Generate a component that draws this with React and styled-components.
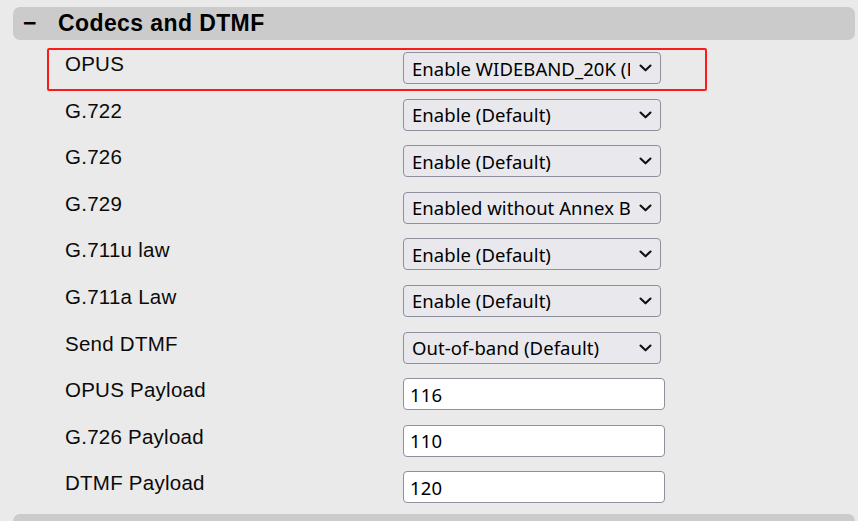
import React from "react";
import styled, { createGlobalStyle } from "styled-components";

const GlobalStyle = createGlobalStyle`
  html, body {
    margin: 0;
    padding: 0;
    background-color: #eaeaea;
  }
  body {
    font-family: "Liberation Sans", Arial, sans-serif;
    color: #000;
    overflow: hidden;
  }
`;

const Page = styled.div`
  padding: 7px 3px 0 13px;
  border-left: 2px solid #f1f1f1;
  margin-left: -2px;
`;

const Section = styled.section`
  display: flex;
  flex-direction: column;
`;

const SectionHeader = styled.div`
  display: flex;
  align-items: center;
  height: 33px;
  padding-left: 10px;
  background-color: #cbcbcb;
  border-radius: 7px;
  font-size: 23px;
  letter-spacing: 0.4px;
  font-weight: bold;
  color: #000;
`;

const Toggle = styled.span`
  width: 35px;
  letter-spacing: 0;
`;

const Rows = styled.div`
  display: flex;
  flex-direction: column;
  gap: 3.6px;
  padding: 8px 0 3.6px 34px;
`;

const Row = styled.div`
  display: flex;
  align-items: flex-start;
  box-sizing: border-box;
  width: 660px;
  height: 43px;
  padding: 2px 16px;
  border: 2px solid ${(p) => (p.$highlight ? "#fb1b1b" : "transparent")};
  border-radius: 2px;
`;

const Label = styled.div`
  width: 338px;
  padding-top: 1px;
  font-size: 20.5px;
  letter-spacing: 0.25px;
  line-height: 22px;
  color: #0a0a0a;
`;

const SelectWrap = styled.div`
  position: relative;
  width: 258px;
  height: 32px;
`;

const Select = styled.select`
  appearance: none;
  box-sizing: border-box;
  width: 100%;
  height: 100%;
  padding: 0 30px 0 8px;
  background-color: #e9e9ed;
  border: 1px solid #8f8f9d;
  border-radius: 4px;
  font-family: "Noto Sans", "Open Sans", sans-serif;
  font-size: 18.5px;
  letter-spacing: 0.05px;
  color: #000;
  outline: none;
`;

const Chevron = styled.svg`
  position: absolute;
  right: 9px;
  top: 12px;
  pointer-events: none;
`;

const Input = styled.input`
  box-sizing: border-box;
  width: 262px;
  height: 32px;
  padding: 0 6px;
  background-color: #fff;
  border: 1px solid #8f8f9d;
  border-radius: 4px;
  font-family: "Noto Sans", "Open Sans", sans-serif;
  font-size: 18.5px;
  letter-spacing: 0.15px;
  color: #000;
  outline: none;
`;

const rows = [
  { label: "OPUS", select: "Enable WIDEBAND_20K (Default)", highlight: true },
  { label: "G.722", select: "Enable (Default)" },
  { label: "G.726", select: "Enable (Default)" },
  { label: "G.729", select: "Enabled without Annex B" },
  { label: "G.711u law", select: "Enable (Default)" },
  { label: "G.711a Law", select: "Enable (Default)" },
  { label: "Send DTMF", select: "Out-of-band (Default)" },
  { label: "OPUS Payload", input: "116" },
  { label: "G.726 Payload", input: "110" },
  { label: "DTMF Payload", input: "120" },
];

function Dropdown({ value }) {
  return (
    <SelectWrap>
      <Select defaultValue={value}>
        <option>{value}</option>
      </Select>
      <Chevron width="13" height="8" viewBox="0 0 13 8">
        <polyline
          points="1.5,1.5 6.5,6.3 11.5,1.5"
          fill="none"
          stroke="#111"
          strokeWidth="2.1"
          strokeLinecap="round"
          strokeLinejoin="round"
        />
      </Chevron>
    </SelectWrap>
  );
}

export default function App() {
  return (
    <>
      <GlobalStyle />
      <Page>
        <Section>
          <SectionHeader>
            <Toggle>−</Toggle>
            Codecs and DTMF
          </SectionHeader>
          <Rows>
            {rows.map((r) => (
              <Row key={r.label} $highlight={r.highlight}>
                <Label>{r.label}</Label>
                {r.select ? (
                  <Dropdown value={r.select} />
                ) : (
                  <Input type="text" defaultValue={r.input} />
                )}
              </Row>
            ))}
          </Rows>
        </Section>
        <Section>
          <SectionHeader />
        </Section>
      </Page>
    </>
  );
}
